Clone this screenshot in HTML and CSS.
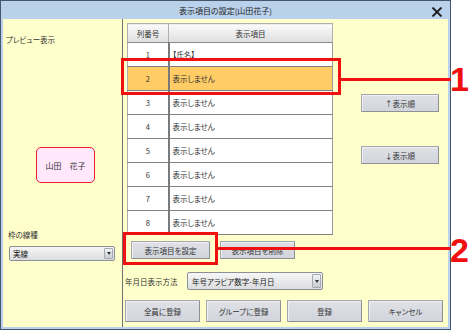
FILE: index.html
```html
<!DOCTYPE html>
<html lang="ja">

<head>
    <meta charset="utf-8">
    <link rel="stylesheet" href="styles.css">
</head>

<body>
    <div class="dialog">
        <header class="titlebar">
            <span class="title">表示項目の設定(山田花子)</span>
            <svg class="close" width="12" height="10" viewBox="0 0 12 10">
                <path d="M1.5 0.5 L10.5 9.5 M10.5 0.5 L1.5 9.5" stroke="#1a1a1a" stroke-width="1.8" fill="none" />
            </svg>
        </header>

        <main class="content">
            <section class="preview-pane">
                <div class="pane-label">プレビュー表示</div>
                <div class="preview-card">山田　花子</div>
                <div class="field-label">枠の線種</div>
                <div class="select line-select">
                    <span>実線</span>
                    <i class="drop"></i>
                </div>
            </section>

            <section class="settings">
                <div class="table-area">
                    <table class="items">
                        <thead>
                            <tr><th class="col-no">列番号</th><th>表示項目</th></tr>
                        </thead>
                        <tbody>
                            <tr><td class="col-no">1</td><td>【氏名】</td></tr>
                            <tr class="selected"><td class="col-no">2</td><td>表示しません</td></tr>
                            <tr><td class="col-no">3</td><td>表示しません</td></tr>
                            <tr><td class="col-no">4</td><td>表示しません</td></tr>
                            <tr><td class="col-no">5</td><td>表示しません</td></tr>
                            <tr><td class="col-no">6</td><td>表示しません</td></tr>
                            <tr><td class="col-no">7</td><td>表示しません</td></tr>
                            <tr><td class="col-no">8</td><td>表示しません</td></tr>
                        </tbody>
                    </table>
                    <div class="order-buttons">
                        <button class="btn order-up">↑表示順</button>
                        <button class="btn order-down">↓表示順</button>
                    </div>
                </div>

                <div class="item-actions">
                    <button class="btn set-item">表示項目を設定</button>
                    <button class="btn delete-item">表示項目を削除</button>
                </div>

                <div class="date-row">
                    <span class="date-label">年月日表示方法</span>
                    <div class="select date-select">
                        <span>年号アラビア数字-年月日</span>
                        <i class="drop"></i>
                    </div>
                </div>

                <div class="footer-buttons">
                    <button class="btn big">全員に登録</button>
                    <button class="btn big">グループに登録</button>
                    <button class="btn big">登録</button>
                    <button class="btn big">キャンセル</button>
                </div>
            </section>
        </main>
    </div>

    <!-- callouts drawn over the dialog -->
    <div class="callout-box box-1"></div>
    <div class="callout-line line-1"></div>
    <div class="callout-num num-1">1</div>

    <div class="callout-box box-2"></div>
    <div class="callout-line line-2"></div>
    <div class="callout-num num-2">2</div>
</body>

</html>
```

FILE: styles.css
```css
html,
body {
    margin: 0;
    padding: 0;
    width: 470px;
    height: 330px;
    background: #ffffff;
    overflow: hidden;
}

body {
    position: relative;
    font-family: "Noto Sans CJK JP", "Noto Sans", sans-serif;
    font-size: 7.5px;
    font-feature-settings: "palt";
    color: #333333;
}

.dialog {
    box-sizing: border-box;
    width: 451px;
    height: 330px;
    border: 1px solid #45566a;
    background: #b9d1ea;
    padding: 0 2px 2px;
    display: flex;
    flex-direction: column;
}

.titlebar {
    height: 18px;
    display: grid;
    grid-template-columns: 1fr auto 1fr;
    align-items: center;
}

.title {
    grid-column: 2;
    font-size: 8px;
    color: #222222;
    padding-top: 1px;
}

.close {
    grid-column: 3;
    justify-self: end;
    margin-right: 5px;
    margin-top: 3px;
}

.content {
    flex: 1;
    display: grid;
    grid-template-columns: 120px 1fr;
    background: #ffffcc;
}

/* left pane */

.preview-pane {
    box-sizing: border-box;
    border-right: 1px solid #6f6f6f;
    display: flex;
    flex-direction: column;
    align-items: flex-start;
}

.pane-label {
    margin: 16px 0 0 3px;
    line-height: 10px;
}

.preview-card {
    box-sizing: border-box;
    margin: 102px 0 0 33px;
    width: 59px;
    height: 36px;
    border: 1.5px solid #ee1c25;
    border-radius: 5px;
    background: #ffe8fb;
    display: flex;
    align-items: center;
    justify-content: center;
    font-size: 8px;
}

.field-label {
    margin: 47px 0 0 5px;
    line-height: 10px;
}

.select {
    box-sizing: border-box;
    display: flex;
    align-items: center;
    border: 1px solid #8b8f96;
    border-radius: 2px;
    background: linear-gradient(#f6f6f6, #dcdde0);
    padding-left: 3px;
}

.select span {
    flex: 1;
    color: #222222;
}

.select .drop {
    box-sizing: border-box;
    width: 9px;
    height: calc(100% - 2px);
    margin-right: 1px;
    border: 1px solid #a5a9b0;
    border-radius: 1px;
    background: linear-gradient(#f2f3f5, #c9ccd2);
    display: flex;
    align-items: center;
    justify-content: center;
}

.select .drop::after {
    content: "";
    border-left: 2px solid transparent;
    border-right: 2px solid transparent;
    border-top: 3px solid #333333;
}

.line-select {
    margin: 6px 0 0 6px;
    width: 106px;
    height: 15px;
}

/* right pane */

.settings {
    padding-left: 2px;
    display: flex;
    flex-direction: column;
    align-items: flex-start;
}

.table-area {
    margin: 4px 0 0 2px;
    display: flex;
    align-items: flex-start;
}

.items {
    width: 206px;
    border-collapse: collapse;
    background: #ffffff;
    table-layout: fixed;
}

.items th {
    height: 18px;
    padding: 0;
    font-weight: normal;
    color: #333333;
    background: linear-gradient(#fbfbfb, #dedede);
    border: 1px solid #b0b0b0;
    border-bottom-color: #8a8a8a;
}

.items td {
    height: 23px;
    padding: 0 0 0 3px;
    border-bottom: 1px solid #808080;
    border-right: 1px solid #9a9a9a;
    color: #333333;
}

.items td.col-no {
    padding: 0;
    text-align: center;
    border-left: 1px solid #b0b0b0;
    border-right: 2px solid #7a7a7a;
}

.items .col-no {
    width: 40px;
}

.items tr.selected td {
    background: #ffcc66;
}

.order-buttons {
    margin-left: 28px;
    display: flex;
    flex-direction: column;
}

.btn {
    box-sizing: border-box;
    font-family: inherit;
    font-size: 7.5px;
    font-feature-settings: "palt";
    color: #333333;
    padding: 0;
    border: 1px solid #a3a6ad;
    border-right-color: #8d9097;
    border-bottom-color: #8d9097;
    border-radius: 1px;
    background: linear-gradient(#dfe1e6, #d2d5dc);
    box-shadow: inset 1px 1px 0 #eef0f3;
}

.order-buttons .btn {
    width: 78px;
    height: 18px;
}

.order-up {
    margin-top: 71px;
}

.order-down {
    margin-top: 34px;
}

.item-actions {
    margin: 6px 0 0 6px;
    display: flex;
    gap: 10px;
}

.set-item {
    width: 79px;
    height: 18px;
}

.delete-item {
    width: 75px;
    height: 18px;
}

.date-row {
    margin-top: 13px;
    display: flex;
    align-items: center;
}

.date-label {
    width: 62px;
}

.date-select {
    width: 136px;
    height: 18px;
    padding-left: 4px;
}

.footer-buttons {
    margin-top: 10px;
    display: flex;
    gap: 6px;
}

.btn.big {
    width: 75px;
    height: 22px;
}

/* callouts */

.callout-box {
    position: absolute;
    box-sizing: border-box;
    border: 3px solid #f01010;
}

.callout-line {
    position: absolute;
    height: 3px;
    background: #f01010;
}

.callout-num {
    position: absolute;
    font-family: "Liberation Sans", Arial, sans-serif;
    font-weight: bold;
    font-size: 34px;
    line-height: 34px;
    color: #f01010;
}

.box-1 {
    left: 121px;
    top: 58px;
    width: 220px;
    height: 37px;
}

.line-1 {
    left: 340px;
    top: 78px;
    width: 111px;
}

.num-1 {
    left: 450px;
    top: 62px;
}

.box-2 {
    left: 123px;
    top: 232px;
    width: 95px;
    height: 33px;
}

.line-2 {
    left: 217px;
    top: 247px;
    width: 234px;
}

.num-2 {
    left: 450px;
    top: 233px;
}
```
